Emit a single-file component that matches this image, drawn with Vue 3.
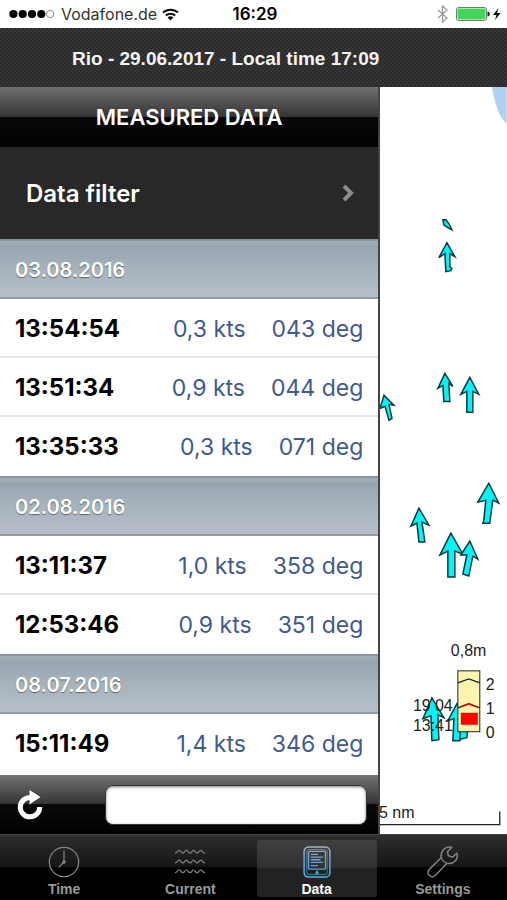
<script setup>
import { ref } from 'vue'

const search = ref('')
const activeTab = ref('data')

const groups = [
  {
    date: '03.08.2016',
    rows: [
      { time: '13:54:54', speed: '0,3 kts', dir: '043 deg' },
      { time: '13:51:34', speed: '0,9 kts', dir: '044 deg' },
      { time: '13:35:33', speed: '0,3 kts', dir: '071 deg' },
    ],
  },
  {
    date: '02.08.2016',
    rows: [
      { time: '13:11:37', speed: '1,0 kts', dir: '358 deg' },
      { time: '12:53:46', speed: '0,9 kts', dir: '351 deg' },
    ],
  },
  {
    date: '08.07.2016',
    rows: [
      { time: '15:11:49', speed: '1,4 kts', dir: '346 deg' },
    ],
  },
]

const tabs = [
  { id: 'time', label: 'Time' },
  { id: 'current', label: 'Current' },
  { id: 'data', label: 'Data' },
  { id: 'settings', label: 'Settings' },
]

// current arrows on the chart
const arrows = [
  '63,133 66,133 69,137 72,143 68,141 64,138',
  '67,156 75,170 70,167 70,180 72,182 71,184 66,185 65,167 59,171',
  '65,287 73,300 69,297 70,315 64,315 63,299 58,302',
  '90,291 99,308 93,305 93,326 87,326 87,305 81,308',
  '4,309 14,319 9,318 12,332 9,334 5,320 0,322',
  '109,397 119,417 113,414 110,437 103,437 104,434 106,414 98,416',
  '39,422 49,439 42,436 45,456 39,456 37,437 31,440',
  '71,447 83,468 75,465 75,491 68,491 68,465 60,469',
  '90,455 98,473 93,470 89,490 83,488 87,469 81,469',
  '80,628 89,632 87,652 78,654',
  '77,618 88,636 81,633 80,655 73,655 74,633 68,635',
  '52,612 64,632 58,629 59,654 52,655 51,630 43,633',
]
</script>

<template>
  <div class="app">
    <div class="status">
      <div class="carrier">
        <svg class="signal" viewBox="0 0 48 10" aria-hidden="true">
          <circle v-for="n in 4" :key="n" :cx="n * 9.5 - 5" cy="5" r="4.2" />
          <circle cx="42" cy="5" r="3.7" fill="none" stroke="#888" />
        </svg>
        <span>Vodafone.de</span>
        <svg class="wifi" viewBox="0 0 17 13" aria-hidden="true">
          <g fill="none" stroke="#111" stroke-width="2">
            <path d="M1 4.6a11 11 0 0 1 15 0" />
            <path d="M3.8 7.5a7 7 0 0 1 9.4 0" />
          </g>
          <path d="M5.6 9.5a4.3 4.3 0 0 1 5.8 0L8.5 12.4z" />
        </svg>
      </div>
      <span class="clock">16:29</span>
      <div class="power">
        <svg class="bluetooth" viewBox="0 0 11 18" aria-hidden="true">
          <path d="M1 5l9 8-4.5 4V1L10 5l-9 8" fill="none" stroke="#999" stroke-width="1.3" />
        </svg>
        <svg class="battery" viewBox="0 0 45 14" aria-hidden="true">
          <rect x="0.5" y="0.5" width="30" height="13" rx="2" fill="#fff" stroke="#777" />
          <rect x="1.5" y="1.5" width="28" height="11" rx="1" fill="#44d65b" />
          <path d="M31.5 4.5c3 0 3 5 0 5z" fill="#222" />
          <path d="M42.5 1l-5.5 7h3.5l-1.5 5 5.5-7h-3.5z" />
        </svg>
      </div>
    </div>

    <header class="header">
      <h1>Rio - 29.06.2017 - Local time 17:09</h1>
    </header>

    <main class="main">
      <section class="panel">
        <h2 class="panel-title">MEASURED DATA</h2>
        <button class="filter">
          <span>Data filter</span>
          <svg viewBox="0 0 12 18" aria-hidden="true">
            <path d="M2 2l7 7-7 7" fill="none" stroke="#8c8c8c" stroke-width="4" />
          </svg>
        </button>

        <div class="list">
          <section v-for="g in groups" :key="g.date">
            <h3 class="date">{{ g.date }}</h3>
            <ul>
              <li v-for="r in g.rows" :key="r.time" class="row">
                <span class="time">{{ r.time }}</span>
                <span class="value">{{ r.speed }}</span>
                <span class="value">{{ r.dir }}</span>
              </li>
            </ul>
          </section>
        </div>

        <div class="toolbar">
          <button class="reload" aria-label="Reload">
            <svg viewBox="0 0 28 30" aria-hidden="true">
              <path d="M15 7.5A9.7 9.7 0 1 0 23.700 17" fill="none" stroke="#fff" stroke-width="5" />
              <path d="M13.500 0l11 7-11 7.500z" fill="#fff" />
            </svg>
          </button>
          <input v-model="search" class="search" type="text" aria-label="Search">
        </div>
      </section>

      <svg class="map" viewBox="0 0 127 747" preserveAspectRatio="xMinYMin meet">
        <path d="M112 0c3 16 7 30 15 37V0z" fill="#b0d1f0" />
        <polygon v-for="a in arrows" :key="a" class="arrow" :points="a" />
        <g class="map-text">
          <text x="33" y="625">19</text>
          <text x="55" y="625">04</text>
          <text x="33" y="645">13:41</text>
        </g>
        <g class="gauge">
          <rect x="78" y="585" width="22" height="61" fill="#fcf4b0" stroke="#222" />
          <path d="M78 597l11-4 11 4" />
          <path d="M78 622l11-4 11 4" />
          <path class="mark" d="M81 621l8-3 8 3" />
          <rect x="81" y="627" width="17" height="12" fill="#f00" />
        </g>
        <g class="map-text">
          <text x="71" y="570">0,8m</text>
          <text x="106" y="604">2</text>
          <text x="106" y="628">1</text>
          <text x="106" y="652">0</text>
          <text x="-1" y="732">5 nm</text>
        </g>
        <path d="M0 739h120v-13" fill="none" stroke="#222" stroke-width="1.3" />
      </svg>
    </main>

    <nav class="tabs">
      <button
        v-for="t in tabs"
        :key="t.id"
        class="tab"
        :class="{ active: activeTab === t.id }"
        @click="activeTab = t.id"
      >
        <svg viewBox="0 0 36 36" fill="none" stroke="#858585" aria-hidden="true">
          <template v-if="t.id === 'time'">
            <circle cx="18" cy="18" r="16.5" stroke-width="1.4" />
            <path d="M18 5v13l-6 6" stroke-width="1.4" />
            <circle cx="18" cy="18" r="1.5" fill="#858585" />
          </template>
          <template v-else-if="t.id === 'current'">
            <path
              v-for="y in [7, 18, 29]"
              :key="y"
              :transform="`translate(1 ${y})`"
              d="M0 1C3 1 3-2 5-2C7-2 7 1 9 1S11-2 13-2S15 1 17 1S19-2 21-2S23 1 25 1S27-2 29-2S31 1 34 1"
              stroke-width="1.4"
            />
          </template>
          <template v-else-if="t.id === 'data'">
            <defs>
              <linearGradient id="tab-glow" x1="0" y1="0" x2="0" y2="36" gradientUnits="userSpaceOnUse">
                <stop offset="0" stop-color="#a9b4c0" />
                <stop offset="0.55" stop-color="#5d9fd8" />
                <stop offset="1" stop-color="#3cc4e8" />
              </linearGradient>
            </defs>
            <g stroke="url(#tab-glow)">
              <rect x="3.5" y="1" width="29" height="34" rx="5" stroke-width="1.7" />
              <rect x="6.5" y="4" width="23" height="28" rx="2" stroke-width="0.7" />
              <rect x="8.5" y="6" width="19" height="20" rx="1" stroke-width="1.5" />
              <path d="M11 9.5h8M11 12.500h14M11 15.500h11M11 18.500h14M11 22h8" stroke-width="1.500" />
              <path d="M16.500 31.500l1.500-3 1.500 3" stroke-width="1.500" />
            </g>
          </template>
          <template v-else>
            <path
              d="M28 1.500C21 0 15 5 16 13L2.500 26.500a4.800 4.800 0 0 0 6.500 7L22.500 19.500C30 21 36 15 33.500 8L29 12.500l-5-1.500-1-4.500z"
              stroke-width="1.6"
              stroke-linejoin="round"
            />
            <path d="M16 13c1 3 3 5 6.500 6.500" stroke-width="1.4" />
          </template>
        </svg>
        <span>{{ t.label }}</span>
      </button>
    </nav>
  </div>
</template>

<style>
body {
  margin: 0;
  background: #fff;
}
</style>

<style scoped>
.app {
  display: flex;
  flex-direction: column;
  min-height: 100vh;
  font-family: Inter, 'Liberation Sans', sans-serif;
  color: #000;
}

h1, h2, h3, ul {
  margin: 0;
  padding: 0;
}

button {
  font-family: inherit;
  border: none;
  cursor: pointer;
}

/* phone status bar */
.status {
  display: grid;
  grid-template-columns: 1fr auto 1fr;
  align-items: center;
  height: 28px;
  padding: 0 6px 0 9px;
  font-size: 16px;
}
.carrier,
.power {
  display: flex;
  align-items: center;
  gap: 5px;
}
.carrier {
  color: #333;
}
.power {
  justify-content: flex-end;
  gap: 8px;
}
.clock {
  font-size: 17px;
  font-weight: 600;
}
.signal { width: 47px; height: 10px; }
.wifi { width: 17px; height: 13px; }
.bluetooth { width: 11px; height: 18px; }
.battery { width: 45px; height: 14px; }

.header {
  display: flex;
  align-items: center;
  height: 59px;
  padding: 2px 72px 0;
  box-sizing: border-box;
  background: repeating-conic-gradient(#2a2a2a 0 25%, #363636 0 50%) 0 0 / 4px 4px;
}
.header h1 {
  font-family: 'Liberation Sans', Arial, sans-serif;
  font-size: 19px;
  font-weight: 700;
  color: #f4f4f4;
  white-space: nowrap;
}

.main {
  display: flex;
  flex: 1;
}

.panel {
  display: flex;
  flex-direction: column;
  width: 75%;
  box-sizing: border-box;
  border-right: 2px solid #444;
}

.panel-title {
  height: 60px;
  line-height: 60px;
  text-align: center;
  font-size: 22px;
  font-weight: 600;
  color: #fff;
  background: linear-gradient(#707070, #343434 50%, #080808 50%, #000);
}

.filter {
  display: flex;
  align-items: center;
  justify-content: space-between;
  height: 92px;
  padding: 0 24px 0 26px;
  background: #282828;
  color: #fff;
  font-size: 24px;
  font-weight: 600;
}
.filter svg {
  width: 12px;
  height: 18px;
}

.list {
  flex: 1;
  background: #fff;
}
.date {
  height: 60px;
  line-height: 58px;
  box-sizing: border-box;
  padding: 0 15px;
  border-top: 2px solid #8b979f;
  border-bottom: 2px solid #919ca5;
  background: linear-gradient(#a3aeb7, #98a6b1 10%, #b5bec8 90%);
  color: #fff;
  font-size: 20px;
  font-weight: 600;
  text-shadow: 0 1px 1px rgba(0, 0, 0, 0.45);
}
.row {
  display: flex;
  align-items: center;
  gap: 26px;
  height: 59px;
  box-sizing: border-box;
  padding: 2px 15px 0;
  border-bottom: 2px solid #e4e4e4;
  list-style: none;
  font-size: 23px;
}
.row:last-child {
  border-bottom-color: transparent;
}
.time {
  flex: 1;
  font-size: 24px;
  font-weight: 700;
}
.value {
  color: #40598f;
}

.toolbar {
  display: flex;
  align-items: center;
  height: 59px;
  padding: 0 11px 0 15px;
  gap: 60px;
  background: linear-gradient(#777, #666 10%, #333 50%, #0a0a0a 50%, #000);
}
.reload {
  padding: 0;
  background: none;
}
.reload svg {
  display: block;
  width: 30px;
  height: 30px;
}
.search {
  flex: 1;
  min-width: 0;
  height: 40px;
  box-sizing: border-box;
  padding: 0 10px;
  border: 1px solid #333;
  border-radius: 8px;
  background: #fff;
  box-shadow: inset 0 1px 3px rgba(0, 0, 0, 0.5);
  font-size: 18px;
}

.map {
  flex: 1;
  min-width: 0;
  background: #fff;
}
.map-text {
  font-family: 'Liberation Sans', Arial, sans-serif;
  font-size: 16px;
  fill: #222;
}
.arrow {
  fill: #00f4f8;
  stroke: #063c40;
  stroke-width: 1.5;
}
.gauge path {
  fill: none;
  stroke: #222;
  stroke-width: 1.3;
}
.gauge .mark {
  stroke: #d00;
}

.tabs {
  display: flex;
  gap: 6px;
  height: 66px;
  box-sizing: border-box;
  padding: 5px 4px 3px;
  border-top: 1px solid #444;
  background: linear-gradient(#2e2e2e, #141414 50%, #000 50%);
}
.tab {
  display: flex;
  flex: 1;
  flex-direction: column;
  align-items: center;
  gap: 3px;
  padding: 6px 0 0;
  border-radius: 3px;
  background: none;
  color: #999;
  font-family: 'Liberation Sans', Arial, sans-serif;
  font-size: 14px;
  font-weight: 700;
}
.tab svg {
  width: 36px;
  height: 36px;
}
.tab.active {
  background: linear-gradient(#404040, #303030 50%, #222 50%);
  color: #fff;
}
</style>
